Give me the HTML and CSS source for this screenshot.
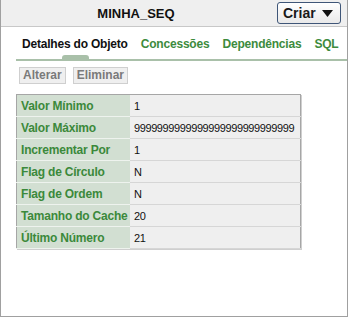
FILE: index.html
```html
<!DOCTYPE html>
<html lang="pt">
<head>
  <meta charset="UTF-8" />
  <title>MINHA_SEQ</title>
  <link rel="stylesheet" href="styles.css">
</head>
<body>
  <div class="panel">
    <header class="bar">
      <h1>MINHA_SEQ</h1>
      <button class="create">Criar
        <svg width="11" height="7" viewBox="0 0 11 7"><path d="M0 0H11L5.5 7Z" fill="#111"/></svg>
      </button>
    </header>

    <nav class="tabs">
      <a class="tab active">Detalhes do Objeto</a>
      <a class="tab">Concessões</a>
      <a class="tab">Dependências</a>
      <a class="tab">SQL</a>
    </nav>

    <div class="actions">
      <button class="btn">Alterar</button>
      <button class="btn">Eliminar</button>
    </div>

    <table class="details">
      <tr><th>Valor Mínimo</th><td>1</td></tr>
      <tr><th>Valor Máximo</th><td>9999999999999999999999999999</td></tr>
      <tr><th>Incrementar Por</th><td>1</td></tr>
      <tr><th>Flag de Círculo</th><td>N</td></tr>
      <tr><th>Flag de Ordem</th><td>N</td></tr>
      <tr><th>Tamanho do Cache</th><td>20</td></tr>
      <tr><th>Último Número</th><td>21</td></tr>
    </table>
  </div>
</body>
</html>
```

FILE: styles.css
```css
body {
  margin: 0;
  font-family: 'Liberation Sans', Arial, sans-serif;
  background: #fff;
}
.panel {
  width: 348px;
  height: 317px;
  box-sizing: border-box;
  border: 1px solid #a0a0a0;
  border-top: none;
  background: #fff;
  overflow: hidden;
}
.bar {
  height: 26px;
  display: flex;
  align-items: center;
  background: #efefef;
  border-bottom: 1px solid #c8c8c8;
}
.bar h1 {
  flex: 1;
  margin: 0;
  padding-right: 6px;
  text-align: center;
  font-size: 13px;
  color: #111;
}
.create {
  margin: 0 6px 0 0;
  width: 64px;
  height: 22px;
  padding: 0 0 0 5px;
  display: flex;
  align-items: center;
  gap: 6px;
  border: 1px solid #3f5678;
  border-radius: 3px;
  background: linear-gradient(#ffffff, #e9e9e9);
  font-family: inherit;
  font-size: 14px;
  font-weight: bold;
  color: #1a1a1a;
}
.tabs {
  display: flex;
  gap: 13px;
  margin-left: 15px;
  padding: 10px 0 0 6px;
  border-bottom: 2px solid #a9c0a9;
}
.tab {
  position: relative;
  flex-shrink: 0;
  padding-bottom: 8px;
  font-size: 12px;
  line-height: 14px;
  letter-spacing: -0.2px;
  white-space: nowrap;
  font-weight: bold;
  color: #3d8b3d;
}
.tab.active {
  color: #111;
}
.tab.active::after {
  content: "";
  position: absolute;
  left: 50%;
  bottom: 0;
  width: 27px;
  height: 4px;
  margin-left: -13px;
  background: #a9c0a9;
  border-radius: 3px 3px 0 0;
}
.actions {
  display: flex;
  gap: 7px;
  margin: 6px 0 0 18px;
}
.btn {
  margin: 0;
  padding: 1px 3px;
  border: 1px solid #cfcfcf;
  background: #efefef;
  font-family: inherit;
  font-size: 12px;
  line-height: 13px;
  font-weight: bold;
  color: #7a7a7a;
}
.details {
  margin: 10px 0 0 15px;
  width: 285px;
  table-layout: fixed;
  border-collapse: collapse;
  border: 1px solid #a6a6a6;
  box-shadow: 1px 1px 0 #cfcfcf;
}
.details th,
.details td {
  height: 21px;
  padding: 0 4px;
  border-bottom: 1px solid #d6d6d6;
  text-align: left;
  white-space: nowrap;
}
.details th {
  width: 105px;
  background: #d2dfd2;
  border-bottom-color: #eef3ee;
  font-size: 12px;
  letter-spacing: -0.2px;
  font-weight: bold;
  color: #3b893b;
}
.details td {
  background: #efefef;
  font-size: 11px;
  letter-spacing: -0.4px;
  color: #111;
}
```
